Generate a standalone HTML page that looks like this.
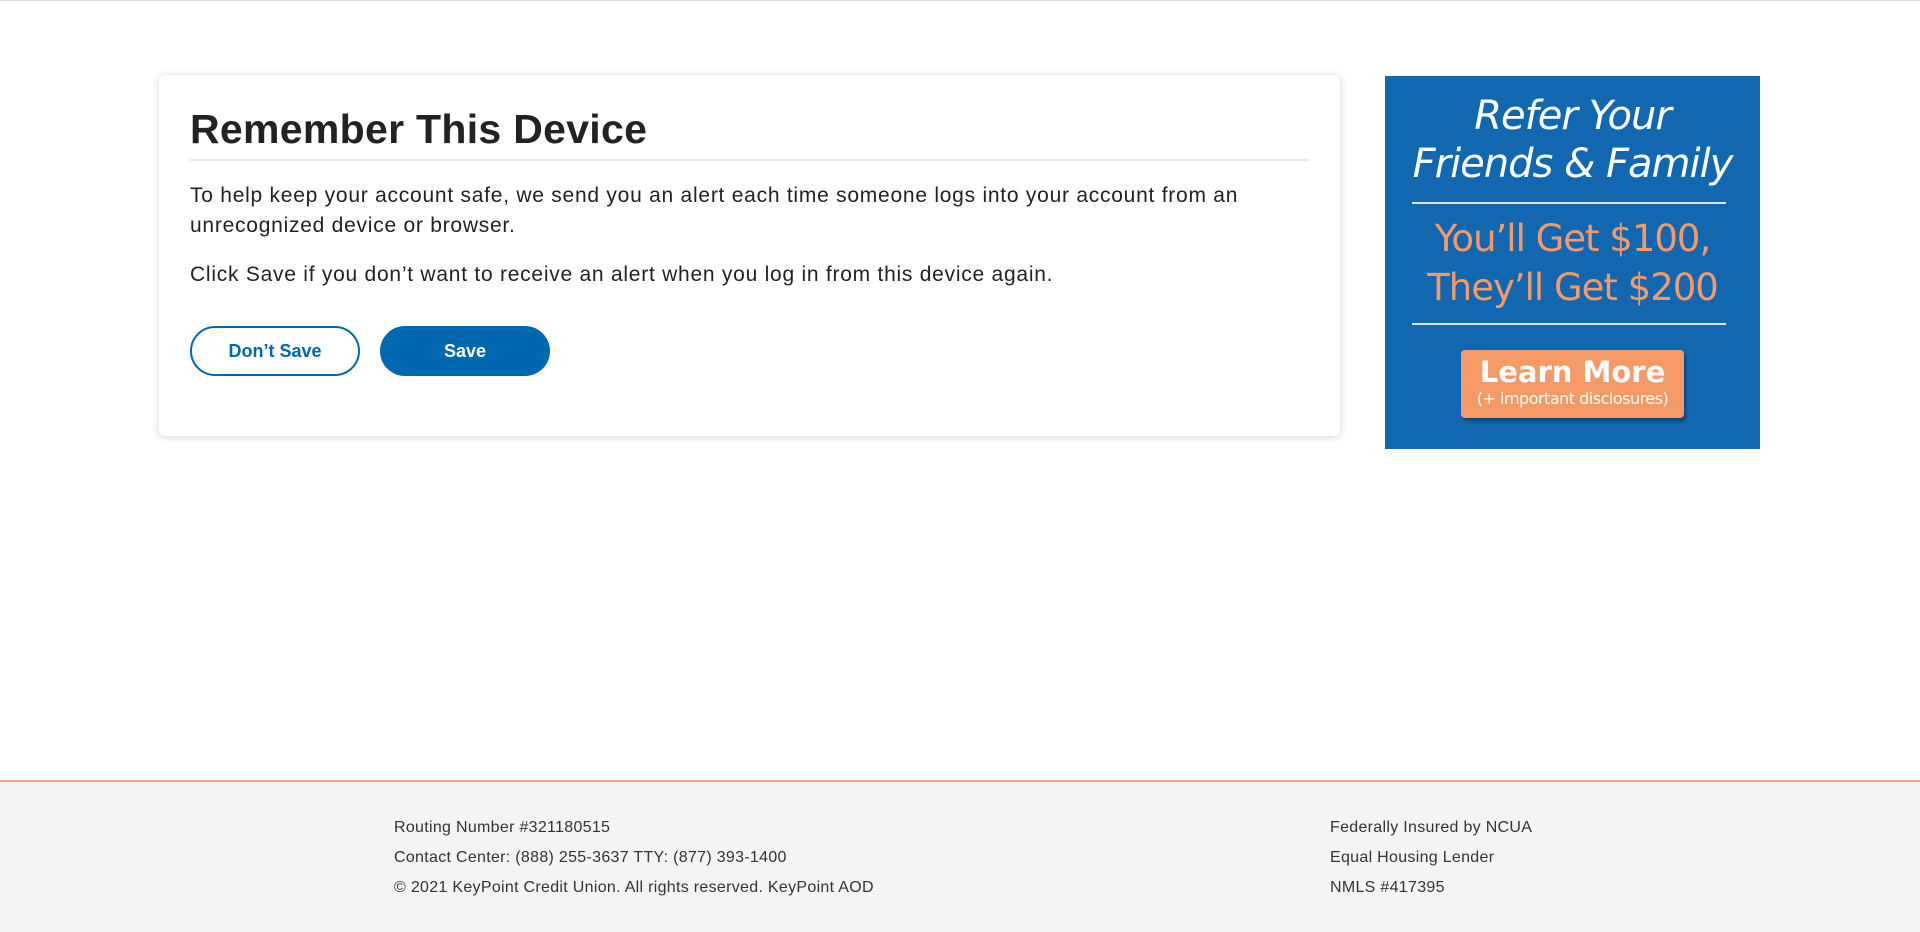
<!DOCTYPE html>
<html><head><meta charset="utf-8"><style>
*{margin:0;padding:0;box-sizing:border-box}
body{width:1920px;height:932px;position:relative;background:#fff;font-family:"Liberation Sans",Arial,sans-serif;overflow:hidden}
.topline{position:absolute;left:0;top:0;width:1920px;height:1px;background:#ddd}
.card{position:absolute;left:159px;top:75px;width:1181px;height:361px;background:#fff;border-radius:6px;box-shadow:0 1px 8px rgba(0,0,0,.18)}
h1{position:absolute;left:31px;top:31px;font-size:41px;font-weight:bold;color:#222;letter-spacing:.3px}
.hr{position:absolute;left:31px;top:84px;width:1120px;height:2px;background:#e6e6e6}
p{position:absolute;left:31px;font-size:21px;color:#222;letter-spacing:.75px;line-height:30px;white-space:nowrap}
.btn{position:absolute;top:251px;width:170px;height:50px;border-radius:25px;font-weight:bold;font-size:18px;text-align:center;line-height:46px}
.b1{left:31px;border:2px solid #0067b1;color:#0067b1;background:#fff}
.b2{left:221px;background:#0067b1;color:#fff;line-height:50px}
.ad{position:absolute;left:1385px;top:76px;width:375px;height:373px;background:#1267b1;font-family:"DejaVu Sans",sans-serif}
.ad .t{position:absolute;width:100%;text-align:center;color:#fff;font-style:italic;font-size:40px;letter-spacing:-1px}
.ad .o{position:absolute;width:100%;text-align:center;color:#f59a66;font-size:37px;letter-spacing:-1px}
.ad .l{position:absolute;left:27px;width:314px;height:2px;background:#dbe7f5}
.lm{position:absolute;left:76px;top:274px;width:223px;height:68px;background:#f59a66;border-radius:4px;box-shadow:2px 3px 3px rgba(0,0,0,.35);color:#fff;text-align:center}
.footer{position:absolute;left:0;top:780px;width:1920px;height:152px;background:#f4f4f4;border-top:2px solid #f8a86e}
.footer div{position:absolute;font-size:16px;color:#333;line-height:30px;white-space:nowrap;letter-spacing:.3px}
</style></head><body>
<div class="topline"></div>
<div class="card">
<h1>Remember This Device</h1>
<div class="hr"></div>
<p style="top:106px">To help keep your account safe, we send you an alert each time someone logs into your account from an<br>unrecognized device or browser.</p>
<p style="top:185px">Click Save if you don’t want to receive an alert when you log in from this device again.</p>
<div class="btn b1">Don’t Save</div>
<div class="btn b2">Save</div>
</div>
<div class="ad">
<div class="t" style="top:17px">Refer Your</div>
<div class="t" style="top:65px">Friends &amp; Family</div>
<div class="l" style="top:126px"></div>
<div class="o" style="top:141px">You’ll Get $100,</div>
<div class="o" style="top:190px">They’ll Get $200</div>
<div class="l" style="top:247px"></div>
<div class="lm"><div style="font-size:29px;font-weight:bold;margin-top:5px;line-height:34px">Learn More</div><div style="font-size:16px;line-height:20px;letter-spacing:-.5px">(+ important disclosures)</div></div>
</div>
<div class="footer">
<div style="left:394px;top:31px">Routing Number #321180515</div>
<div style="left:394px;top:61px">Contact Center: (888) 255-3637 TTY: (877) 393-1400</div>
<div style="left:394px;top:91px">© 2021 KeyPoint Credit Union. All rights reserved. KeyPoint AOD</div>
<div style="left:1330px;top:31px">Federally Insured by NCUA</div>
<div style="left:1330px;top:61px">Equal Housing Lender</div>
<div style="left:1330px;top:91px">NMLS #417395</div>
</div>
</body></html>
